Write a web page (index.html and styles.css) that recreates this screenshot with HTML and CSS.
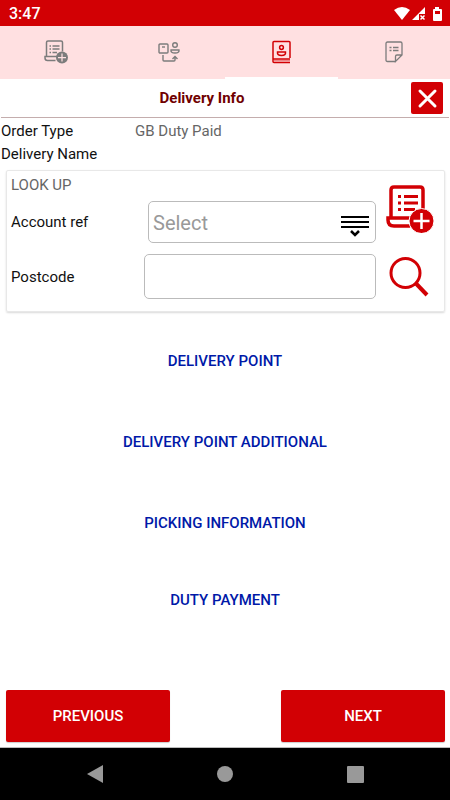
FILE: index.html
```html
<!DOCTYPE html>
<html lang="en">

<head>
  <meta charset="UTF-8">
  <meta name="viewport" content="width=device-width, initial-scale=1.0">
  <title>Delivery Info</title>
  <link rel="stylesheet" href="styles.css">
</head>

<body>
  <div id="app">
    <div class="status">
      <span>3:47</span>
      <svg class="status-icons" width="48" height="16" viewBox="0 0 48 16" fill="#fff">
        <path d="M0 4Q8-2 16 4L8 14z" />
        <path d="M31 1v7h-6v6h-7z" />
        <path d="M26.500 9.500l4 4M30.500 9.500l-4 4" stroke="#fff" stroke-width="1.5" />
        <path fill-rule="evenodd" d="M41 1h4v2h2q1 0 1 1v10q0 1-1 1h-7q-1 0-1-1V4q0-1 1-1h1zM41 5v3h5V5z" />
      </svg>
    </div>

    <nav class="tabs">
      <a class="tab" href="#order" aria-label="Order">
        <svg width="24" height="24" viewBox="0 0 48 48" fill="none" stroke="currentColor" stroke-width="3">
          <path d="M5 32V5q0-3 3-3h26q3 0 3 3v18M26 33H2v3q0 5 5 5h16" />
          <path d="M11 12h3M17 12h14M11 18h3M17 18h14M11 25h3M17 25h9" />
          <circle cx="36" cy="35" r="12" fill="currentColor" stroke="none" />
          <path d="M36 27v16M28 35h16" stroke="#ffe0e1" stroke-width="2.5" />
        </svg>
      </a>
      <a class="tab" href="#customer" aria-label="Customer">
        <svg width="24" height="24" viewBox="0 0 24 24" fill="none" stroke="currentColor" stroke-width="1.4">
          <rect x="2" y="4" width="9" height="9" rx="1" />
          <path d="M5 7h3" />
          <circle cx="18" cy="5" r="2.3" />
          <path d="M14 10h8q.5 3-4 3t-4-3z" />
          <path d="M6 15v5q0 1 1 1h10q1 0 1-1v-3M15.500 19l2.500-2.500 2.500 2.500" />
        </svg>
      </a>
      <a class="tab active" href="#delivery" aria-label="Delivery" aria-current="page">
        <svg width="24" height="24" viewBox="0 0 24 24" fill="none" stroke="currentColor" stroke-width="1.5">
          <path d="M21 18V2.500q0-1-1-1H5q-1 0-1 1v19q0 1 1 1h16M4 19h17" />
          <path d="M5 20.500h16" stroke-opacity=".4" />
          <circle cx="12.500" cy="7.500" r="1.900" />
          <path d="M8.500 12h8q.5 3.500-4 3.500t-4-3.500z" />
        </svg>
      </a>
      <a class="tab" href="#notes" aria-label="Notes">
        <svg width="24" height="24" viewBox="0 0 24 24" fill="none" stroke="currentColor" stroke-width="1.300">
          <path d="M14 21.500H5.500q-1.500 0-1.500-1.500V3.500Q4 2 5.500 2h13Q20 2 20 3.500V15l-6.500 6.500V16.500q0-1.500 1.500-1.500h5" />
          <path d="M7.500 7.500h2M11 7.500h5.500M7.500 10.500h2M11 10.500h5.500" />
        </svg>
      </a>
    </nav>

    <header class="header">
      <h1 class="title">Delivery Info</h1>
      <button class="close" type="button" aria-label="Close">
        <svg width="32" height="32" viewBox="0 0 32 32" fill="none" stroke="#fff" stroke-width="3" stroke-linecap="round">
          <path d="M9 9l15 15M24 9L9 24" />
        </svg>
      </button>
    </header>

    <main class="content">
      <dl class="info">
        <dt>Order Type</dt>
        <dd>GB Duty Paid</dd>
        <dt>Delivery Name</dt>
        <dd></dd>
      </dl>

      <form class="card">
        <h2 class="card-title">LOOK UP</h2>
        <div class="field">
          <label for="account">Account ref</label>
          <div class="select-box">
            <select id="account" class="inp">
              <option>Select</option>
            </select>
            <svg class="select-icon" width="28" height="22" viewBox="0 0 28 22" fill="none" stroke="#000" stroke-width="2">
              <path d="M0 2h28M0 7h28M0 12h28" />
              <path d="M10 16l4 4 4-4" stroke-width="2.500" />
            </svg>
          </div>
          <button class="icon-btn raised" type="button" aria-label="Add account">
            <svg width="48" height="48" viewBox="0 0 48 48" fill="none" stroke="currentColor" stroke-width="3.500">
              <path d="M5 33V5q0-3 3-3h26q3 0 3 3v20M27 33H2v2q0 6 6 6h16" />
              <path d="M12 11.500h3M18 11.500h14M12 18h3M18 18h14M12 24.500h3M18 24.500h11" stroke-width="3" />
              <circle cx="35.500" cy="36" r="12.500" fill="currentColor" stroke="#fff" stroke-width="1" />
              <path d="M35.500 28v16M27.500 36h16" stroke="#fff" stroke-width="2.500" />
            </svg>
          </button>
        </div>
        <div class="field postcode">
          <label for="postcode">Postcode</label>
          <input id="postcode" class="inp" type="text">
          <button class="icon-btn" type="button" aria-label="Search postcode">
            <svg width="48" height="48" viewBox="0 0 48 48" fill="none" stroke="currentColor" stroke-width="3">
              <circle cx="19.500" cy="19" r="14.500" />
              <path d="M30 29.500L41 41" stroke-width="4" />
            </svg>
          </button>
        </div>
      </form>

      <div class="sections">
        <button class="section" type="button">DELIVERY POINT</button>
        <button class="section" type="button">DELIVERY POINT ADDITIONAL</button>
        <button class="section" type="button">PICKING INFORMATION</button>
        <button class="section last" type="button">DUTY PAYMENT</button>
      </div>
    </main>

    <footer class="footer">
      <button class="btn" type="button">PREVIOUS</button>
      <button class="btn" type="button">NEXT</button>
    </footer>

    <div class="system-nav">
      <button type="button" aria-label="Back">
        <svg width="18" height="18" viewBox="0 0 18 18"><path d="M1 9L17 0v18z" /></svg>
      </button>
      <button type="button" aria-label="Home">
        <svg width="18" height="18" viewBox="0 0 18 18"><circle cx="9" cy="9" r="8" /></svg>
      </button>
      <button type="button" aria-label="Recent apps">
        <svg width="18" height="18" viewBox="0 0 18 18"><rect x="1" y="1" width="17" height="17" rx="1" /></svg>
      </button>
    </div>
  </div>
</body>

</html>
```

FILE: styles.css
```css
* {
  box-sizing: border-box;
}

body {
  margin: 0;
  font-family: Roboto, "Liberation Sans", sans-serif;
  font-size: 15px;
  color: #111;
  background-color: #fff;
}

svg {
  display: block;
}

button {
  padding: 0;
  border: none;
  background: none;
  font-family: inherit;
  cursor: pointer;
}

#app {
  display: flex;
  flex-direction: column;
  min-height: 100vh;
}

/* status bar */
.status {
  display: flex;
  justify-content: space-between;
  align-items: center;
  height: 26px;
  padding: 1px 8px 0 9px;
  background-color: #d20004;
  color: #fff;
  font-size: 16px;
  font-weight: 500;
}

/* tabs */
.tabs {
  display: grid;
  grid-template-columns: repeat(4, 1fr);
  height: 53px;
  background-color: #ffe0e1;
}

.tab {
  display: flex;
  justify-content: center;
  align-items: center;
  border-bottom: 2px solid transparent;
  color: #7c7c7c;
}

.tab.active {
  border-bottom-color: #fff;
  color: #d20004;
}

/* header */
.header {
  display: grid;
  grid-template-columns: 1fr 32px;
  align-items: center;
  height: 39px;
  margin: 0 1px;
  padding-right: 6px;
  border-bottom: 1px solid #c4adad;
}

.title {
  margin: 0;
  padding-right: 8px;
  font-size: 15px;
  font-weight: 700;
  text-align: center;
  color: #700000;
}

.close {
  border-radius: 2px;
  background-color: #d20004;
}

.content {
  flex: 1;
}

.info {
  display: grid;
  grid-template-columns: 134px 1fr;
  margin: 2px 1px 0;
  line-height: 23px;
}

.info dd {
  margin: 0;
  color: #666;
}

/* look up */
.card {
  margin: 4px 5px 0 6px;
  padding: 4px 4px 12px;
  border: 1px solid #e8e8e8;
  border-radius: 2px;
  box-shadow: 0 1px 2px rgba(0, 0, 0, 0.15);
}

.card-title {
  margin: 0;
  font-size: 15px;
  font-weight: 400;
  line-height: 20px;
  color: #666;
}

.field {
  display: grid;
  grid-template-columns: 133px 1fr 64px;
  align-items: center;
  margin-top: 6px;
}

.postcode {
  margin-top: 11px;
}

.select-box {
  position: relative;
  margin-left: 4px;
}

.inp {
  display: block;
  width: 100%;
  height: 42px;
  padding: 1px 4px 0;
  outline: none;
  appearance: none;
  border: 1px solid #bbb;
  border-radius: 5px;
  background-color: #fff;
  color: #999;
  font-family: inherit;
  font-size: 20px;
}

.postcode .inp {
  height: 45px;
}

.select-icon {
  position: absolute;
  right: 7px;
  top: 14px;
  pointer-events: none;
}

.icon-btn {
  justify-self: end;
  height: 45px;
  margin-right: 6px;
  color: #d20004;
}

.raised {
  height: 48px;
  margin-top: -26px;
}

/* sections */
.sections {
  display: flex;
  flex-direction: column;
  align-items: center;
  margin-top: 8px;
}

.section {
  height: 81px;
  color: #0019a8;
  font-size: 15px;
  font-weight: 500;
}

.section.last {
  height: 73px;
}

/* footer */
.footer {
  display: flex;
  justify-content: space-between;
  padding: 0 5px 5px 6px;
  border-bottom: 1px solid #bbb;
}

.btn {
  width: 164px;
  height: 52px;
  border-radius: 2px;
  background-color: #d20004;
  box-shadow: 0 1px 1px rgba(0, 0, 0, 0.2);
  color: #fff;
  font-size: 15px;
  font-weight: 500;
}

.system-nav {
  display: flex;
  justify-content: center;
  align-items: center;
  gap: 112px;
  height: 52px;
  background-color: #000;
}

.system-nav svg {
  fill: #999;
}
```
